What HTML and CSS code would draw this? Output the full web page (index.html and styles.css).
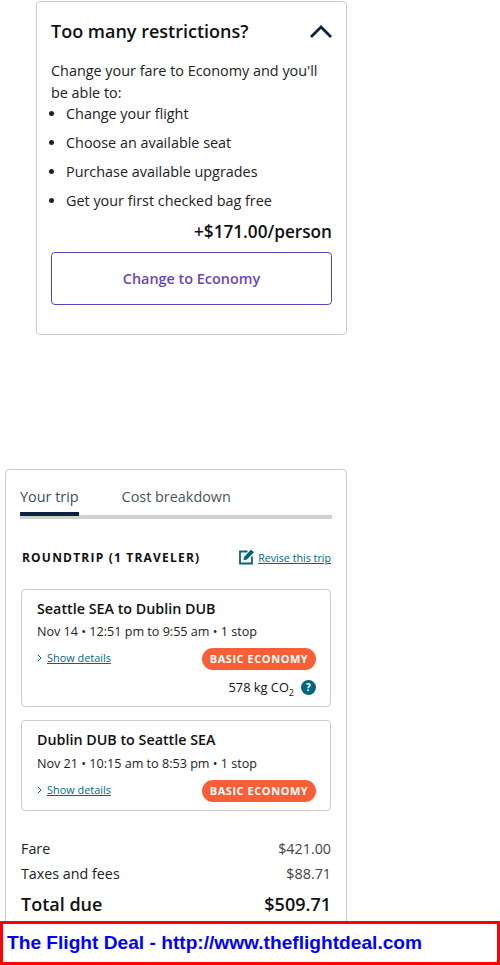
FILE: index.html
```html
<!DOCTYPE html>
<html lang="en">
<head>
<meta charset="utf-8">
<title>Your trip</title>
<link rel="stylesheet" href="styles.css">
</head>
<body>
<div class="page">
  <section class="upsell">
    <div class="upsell-head">
      <h2>Too many restrictions?</h2>
      <svg class="chev-up" width="22" height="13" viewBox="0 0 22 13"><path d="M1 12 11 2l10 10" fill="none" stroke="#0c2340" stroke-width="2.800"/></svg>
    </div>
    <p class="intro">Change your fare to Economy and you'll be able to:</p>
    <ul class="perks">
      <li>Change your flight</li>
      <li>Choose an available seat</li>
      <li>Purchase available upgrades</li>
      <li>Get your first checked bag free</li>
    </ul>
    <div class="price">+$171.00/person</div>
    <button class="change">Change to Economy</button>
  </section>

  <section class="trip">
    <div class="tabs">
      <span class="tab active">Your trip</span>
      <span class="tab">Cost breakdown</span>
    </div>
    <div class="trip-head">
      <h3>ROUNDTRIP (1 TRAVELER)</h3>
      <a class="revise">
        <svg width="16" height="17" viewBox="0 0 16 17"><path d="M8.500 3.500H1v12h12V8.500" fill="none" stroke="#00677f" stroke-width="1.800"/><path d="M5 9 12 1.500l3 2.800L8 11.500l-3.500.8z" fill="#00677f"/></svg>
        <span>Revise this trip</span>
      </a>
    </div>

    <article class="leg first">
      <h4>Seattle SEA to Dublin DUB</h4>
      <p class="times">Nov 14 • 12:51 pm to 9:55 am • 1 stop</p>
      <div class="leg-row">
        <a class="details"><svg width="5" height="8" viewBox="0 0 5 8"><path d="M.7.7 4 4 .7 7.300" fill="none" stroke="#00677f" stroke-width="1"/></svg><span>Show details</span></a>
        <span class="badge">BASIC ECONOMY</span>
      </div>
      <div class="co2"><span>578 kg CO<sub>2</sub></span><i class="help">?</i></div>
    </article>

    <article class="leg second">
      <h4>Dublin DUB to Seattle SEA</h4>
      <p class="times">Nov 21 • 10:15 am to 8:53 pm • 1 stop</p>
      <div class="leg-row">
        <a class="details"><svg width="5" height="8" viewBox="0 0 5 8"><path d="M.7.7 4 4 .7 7.300" fill="none" stroke="#00677f" stroke-width="1"/></svg><span>Show details</span></a>
        <span class="badge">BASIC ECONOMY</span>
      </div>
    </article>

    <div class="sum"><span>Fare</span><span class="amt">$421.00</span></div>
    <div class="sum"><span>Taxes and fees</span><span class="amt">$88.71</span></div>
    <div class="sum total"><span>Total due</span><span>$509.71</span></div>
  </section>

  <div class="banner">The Flight Deal - http://www.theflightdeal.com</div>
</div>
</body>
</html>
```
FILE: styles.css
```css
* { box-sizing: border-box; }
html, body { margin: 0; padding: 0; background: #fff; }
body { font-family: "Open Sans", sans-serif; color: #0c2340; }
.page { position: relative; width: 500px; height: 965px; overflow: hidden; }
h2, h3, h4, p, ul { margin: 0; padding: 0; }

.upsell {
  margin: 1px 0 0 36px; width: 311px; height: 334px;
  border: 1px solid #ccc; border-radius: 4px; padding: 0 14px;
  display: flex; flex-direction: column;
}
.upsell-head { display: flex; justify-content: space-between; align-items: center; height: 58px; }
.upsell-head h2 { font-size: 18px; font-weight: 600; color: #111; line-height: 58px; }
.intro { font-size: 14.400px; line-height: 22px; color: #222; }
.perks { margin-left: 15px; font-size: 14.400px; line-height: 19px; color: #222; list-style: disc; }
.perks li { margin-bottom: 10px; }
.perks li:last-child { margin-bottom: 0; }
.price { font-size: 17.200px; font-weight: 600; color: #111; text-align: right; line-height: 22px; margin-top: 11px; }
.change {
  margin-top: 9px; width: 281px; height: 53px; background: #fff;
  border: 1px solid #6040b8; border-radius: 4px; color: #6b46b5;
  font: 600 14.400px "Open Sans", sans-serif; padding: 0;
}

.trip {
  margin: 134px 0 0 5px; width: 342px; height: 520px;
  border: 1px solid #ccc; border-radius: 4px; padding: 0 14px;
}
.tabs { display: flex; height: 49px; border-bottom: 4px solid #d0d0ce; align-items: flex-start; padding-top: 17px; }
.tab { font-size: 14.400px; line-height: 20px; color: #4a5460; }
.tab:first-child { margin-right: 43px; }
.tab.active { position: relative; color: #3a4a60; }
.tab.active::after {
  content: ""; position: absolute; left: 0; width: 59px; top: 25px; height: 4px; background: #0c2340;
}
.trip-head { display: flex; justify-content: space-between; align-items: center; margin-top: 28px; padding: 0 1px 0 2px; height: 20px; }
.trip-head h3 { font-size: 12px; font-weight: 700; letter-spacing: 1.200px; color: #111; }
.revise { display: flex; align-items: center; gap: 3px; font-size: 10.700px; color: #00677f; margin-top: 2px; }
.revise span { text-decoration: underline; }
.revise svg { margin-top: -3px; }

.leg {
  margin-left: 1px; width: 310px;
  border: 1px solid #ccc; border-radius: 4px; padding: 9px 14px 9px 15px;
}
.leg.first { height: 118px; margin-top: 22px; }
.leg.second { height: 91px; margin-top: 13px; }
.leg h4 { font-size: 14.300px; font-weight: 600; line-height: 20px; color: #111; }
.times { font-size: 12.600px; line-height: 18px; margin-top: 4px; color: #222; }
.second .times { margin-top: 5px; }
.leg-row { display: flex; justify-content: space-between; align-items: center; margin-top: 7px; height: 22px; }
.details { display: flex; align-items: center; gap: 5px; font-size: 10.900px; color: #00677f; margin-top: -3px; }
.details span { text-decoration: underline; }
.badge {
  background: #f95f35; color: #fff; font-size: 11px; font-weight: 700; letter-spacing: .55px;
  border-radius: 11px; height: 22px; line-height: 22px; width: 114px; text-align: center;
}
.co2 { display: flex; justify-content: flex-end; align-items: center; gap: 7px; margin-top: 9px; font-size: 12.800px; line-height: 16px; color: #111; }
.co2 sub { font-size: 9px; line-height: 0; }
.help {
  width: 15px; height: 15px; border-radius: 50%; background: #00677f; color: #fff;
  font: 700 10px/15px "Open Sans", sans-serif; text-align: center;
}

.sum { display: flex; justify-content: space-between; font-size: 14.300px; line-height: 25px; color: #222; padding: 0 1px; }
.leg + .sum { margin-top: 25px; }
.amt { color: #444; }
.sum.total { font-size: 18px; font-weight: 600; color: #111; line-height: 30px; margin-top: 3px; }

.banner {
  position: absolute; left: 0; top: 921px; width: 500px; height: 44px;
  border: 3px solid #f00; background: #fff; color: #00f;
  font: 700 19.150px/38px "Liberation Sans", sans-serif; padding-left: 4px;
}
```
